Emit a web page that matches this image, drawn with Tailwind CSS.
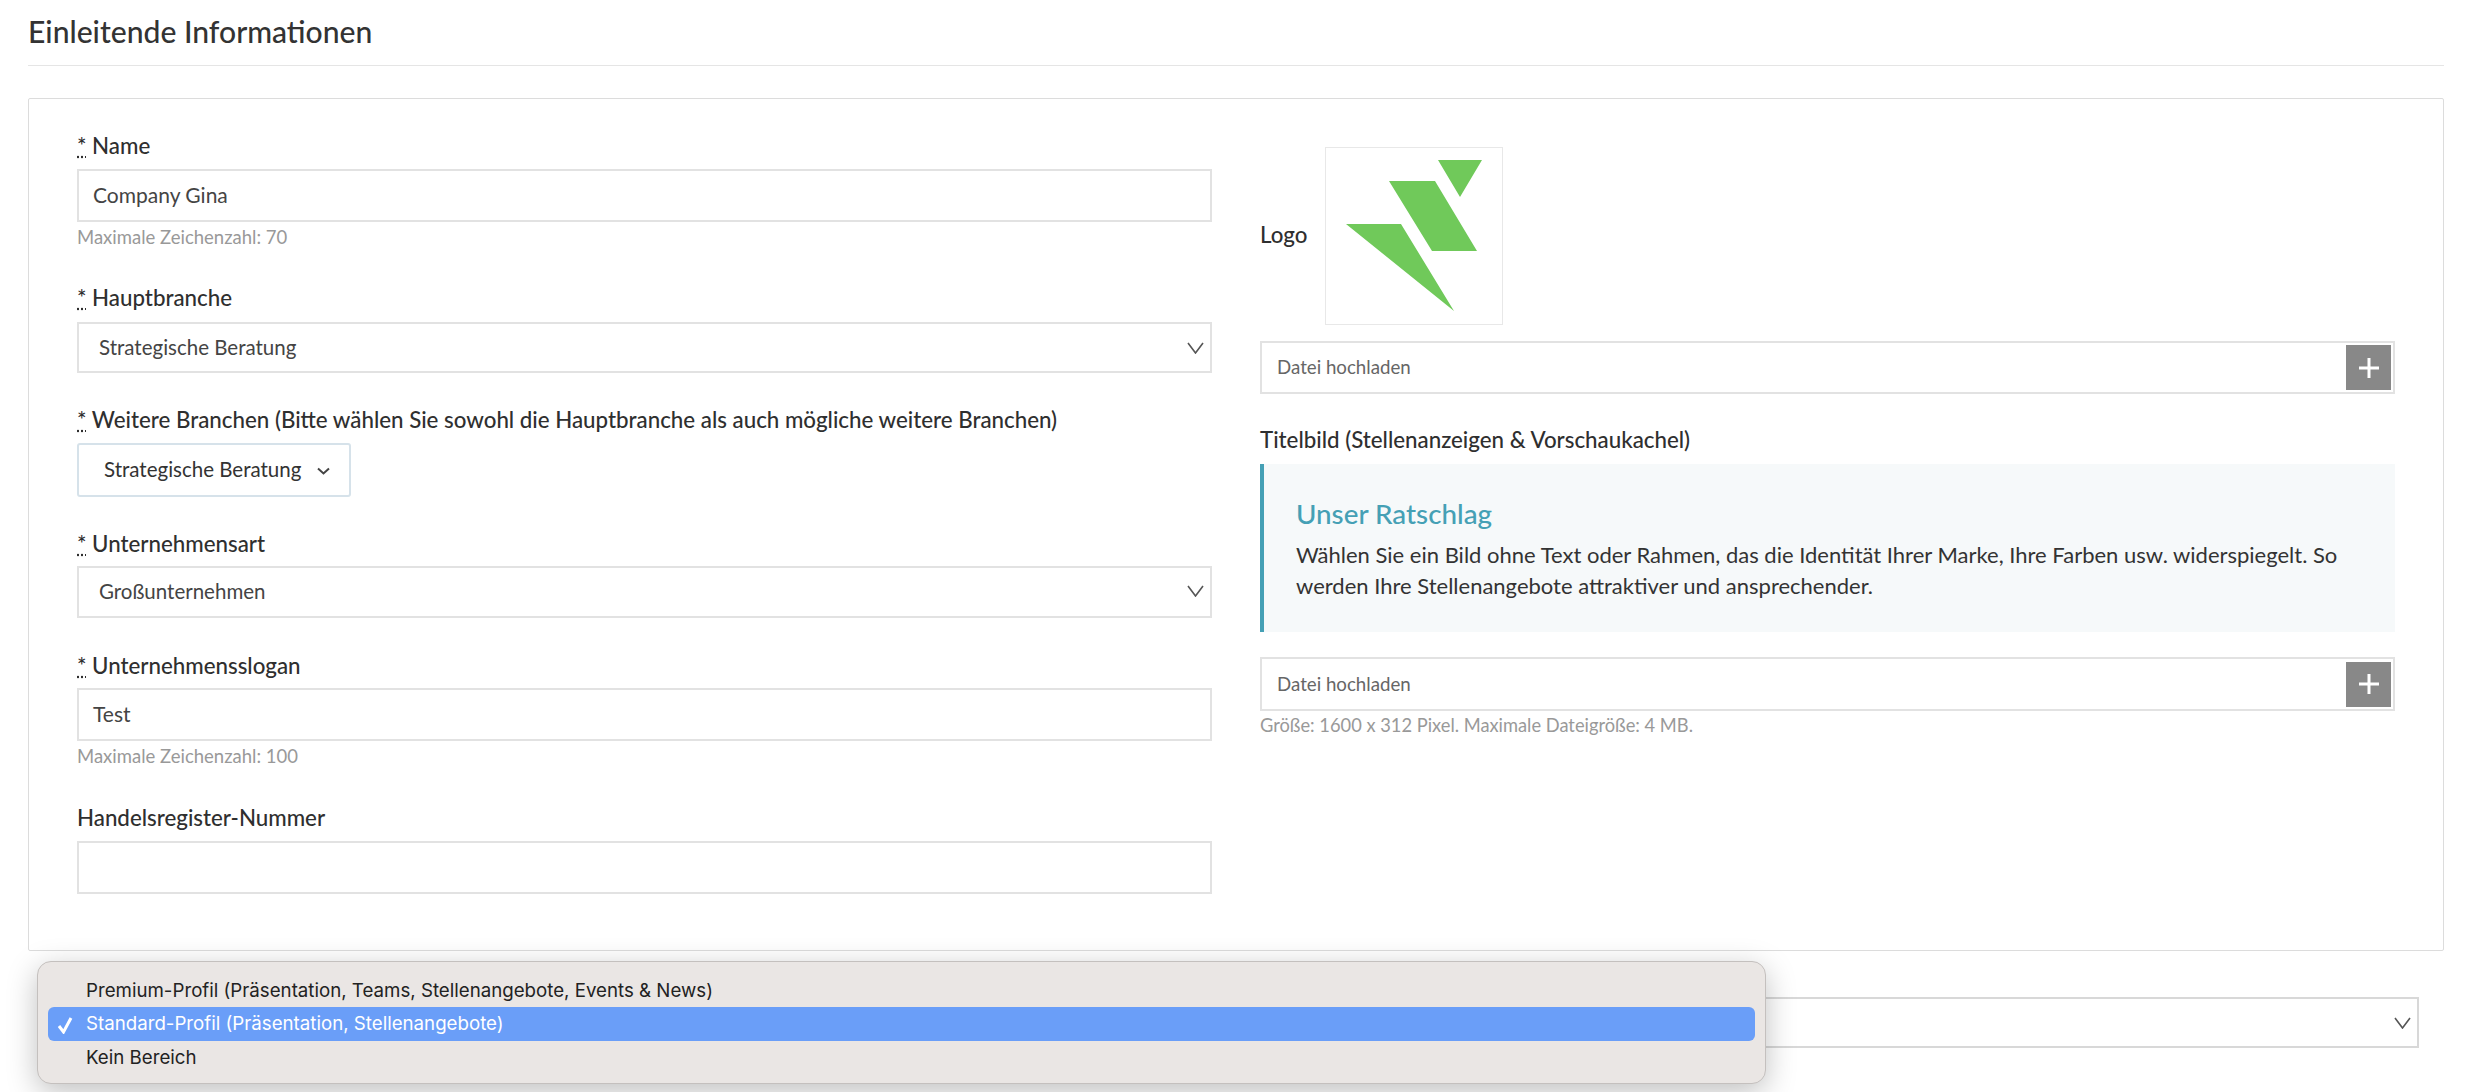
<!DOCTYPE html>
<html lang="de">
<head>
    <meta charset="UTF-8" />
    <title>Einleitende Informationen</title>
    <script src="https://cdn.jsdelivr.net/npm/@tailwindcss/browser@4"></script>
</head>
<body class="bg-white overflow-hidden font-['Lato',sans-serif] text-[#2f2f2f]">
<div class="relative h-[1092px] w-[2472px] overflow-hidden">
    <div class="px-[28px]">
        <h2 class="h-[66px] border-b border-[#e5e5e5] pt-[13px] text-[30.1px] leading-[36px] font-medium text-[#333]">Einleitende Informationen</h2>

        <div class="mt-[32px] h-[853px] rounded-[2px] border border-[#dcdcdc] flex">
            <!-- linke Spalte -->
            <div class="ml-[48px] w-[1135px] pt-[33px]">
                <label class="block h-[37px] text-[22.3px] leading-[28px] font-medium"><span class="underline decoration-dotted">*</span> Name</label>
                <div class="h-[53px] border-2 border-[#e2e2e2] px-[14px] text-[21px] leading-[47px] text-[#444]">Company Gina</div>
                <p class="mt-[5px] h-[20px] text-[18.5px] leading-[20px] text-[#999]">Maximale Zeichenzahl: 70</p>

                <label class="mt-[37px] block h-[38px] text-[22.3px] leading-[28px] font-medium"><span class="underline decoration-dotted">*</span> Hauptbranche</label>
                <div class="flex h-[51px] items-center justify-between border-2 border-[#e2e2e2] pl-[20px] pr-[5px] text-[20.5px] text-[#444]">
                    <span>Strategische Beratung</span>
                    <svg width="19" height="12" viewBox="0 0 19 12" fill="none" stroke="#555" stroke-width="1.6"><path d="M2 1l7.5 10L17 1"/></svg>
                </div>

                <label class="mt-[33px] block h-[37px] text-[22.3px] leading-[28px] font-medium"><span class="underline decoration-dotted">*</span> Weitere Branchen (Bitte wählen Sie sowohl die Hauptbranche als auch mögliche weitere Branchen)</label>
                <div class="flex h-[54px] w-[274px] items-center gap-[16px] rounded-[3px] border-2 border-[#d6e2ea] pl-[25px] pb-[2px] text-[20.5px] text-[#333]">
                    <span>Strategische Beratung</span>
                    <svg class="mt-[4px]" width="13" height="8" viewBox="0 0 13 8" fill="none" stroke="#444" stroke-width="2"><path d="M1 1.5l5.5 5 5.5-5"/></svg>
                </div>

                <label class="mt-[33px] block h-[36px] text-[22.3px] leading-[28px] font-medium"><span class="underline decoration-dotted">*</span> Unternehmensart</label>
                <div class="flex h-[52px] items-center justify-between border-2 border-[#e2e2e2] pl-[20px] pr-[5px] pb-[2px] text-[20.5px] text-[#444]">
                    <span>Großunternehmen</span>
                    <svg width="19" height="12" viewBox="0 0 19 12" fill="none" stroke="#555" stroke-width="1.6"><path d="M2 1l7.5 10L17 1"/></svg>
                </div>

                <label class="mt-[34px] block h-[36px] text-[22.3px] leading-[28px] font-medium"><span class="underline decoration-dotted">*</span> Unternehmensslogan</label>
                <div class="h-[53px] border-2 border-[#e2e2e2] px-[14px] text-[21px] leading-[47px] text-[#444]">Test</div>
                <p class="mt-[5px] h-[20px] text-[18.5px] leading-[20px] text-[#999]">Maximale Zeichenzahl: 100</p>

                <label class="mt-[38px] block h-[37px] text-[22.3px] leading-[28px] font-medium">Handelsregister-Nummer</label>
                <div class="h-[53px] border-2 border-[#e2e2e2]"></div>
            </div>

            <!-- rechte Spalte -->
            <div class="ml-[48px] w-[1135px] pt-[48px]">
                <div class="flex items-center gap-[17px]">
                    <span class="mb-[3px] text-[22.3px] font-medium">Logo</span>
                    <div class="h-[178px] w-[178px] border border-[#e8e8e8]">
                        <svg width="176" height="176" viewBox="0 0 176 176">
                            <path fill="#70c95a" d="M20 76H75L128 163zM63 33H109L151 103H106zM112 12H156L134 49z"/>
                        </svg>
                    </div>
                </div>
                <div class="mt-[16px] flex h-[53px] items-center justify-between border-2 border-[#e2e2e2] pl-[15px] pr-[2px] text-[18.7px] text-[#666]">
                    <span>Datei hochladen</span>
                    <span class="flex h-[45px] w-[45px] items-center justify-center bg-[#888]">
                        <svg width="20" height="20" viewBox="0 0 20 20" fill="none" stroke="#fff" stroke-width="3"><path d="M10 0v20M0 10h20"/></svg>
                    </span>
                </div>

                <p class="mt-[32px] h-[28px] text-[22.3px] leading-[28px] font-medium">Titelbild (Stellenanzeigen &amp; Vorschaukachel)</p>
                <div class="mt-[10px] h-[168px] border-l-4 border-[#45a0b5] bg-[#f6f9fa] pl-[32px] pt-[33px]">
                    <h3 class="text-[27.8px] leading-[34px] font-medium text-[#45a0b5]">Unser Ratschlag</h3>
                    <p class="mt-[8px] text-[22px] leading-[31px] text-[#333]">Wählen Sie ein Bild ohne Text oder Rahmen, das die Identität Ihrer Marke, Ihre Farben usw. widerspiegelt. So<br>werden Ihre Stellenangebote attraktiver und ansprechender.</p>
                </div>
                <div class="mt-[25px] flex h-[54px] items-center justify-between border-2 border-[#e2e2e2] pl-[15px] pr-[2px] text-[18.7px] text-[#666]">
                    <span>Datei hochladen</span>
                    <span class="flex h-[45px] w-[45px] items-center justify-center bg-[#888]">
                        <svg width="20" height="20" viewBox="0 0 20 20" fill="none" stroke="#fff" stroke-width="3"><path d="M10 0v20M0 10h20"/></svg>
                    </span>
                </div>
                <p class="mt-[4px] text-[18.3px] leading-[20px] text-[#999]">Größe: 1600 x 312 Pixel. Maximale Dateigröße: 4 MB.</p>
            </div>
        </div>

        <!-- Bereich-Auswahl unter der Karte -->
        <div class="ml-[25px] mr-[25px] mt-[46px] flex h-[51px] items-center justify-end border-2 border-[#d8d8d8] pr-[5px]">
            <svg width="19" height="12" viewBox="0 0 19 12" fill="none" stroke="#555" stroke-width="1.6"><path d="M2 1l7.5 10L17 1"/></svg>
        </div>
    </div>

    <!-- geöffnetes natives Auswahlmenü -->
    <div class="absolute left-[37px] top-[961px] h-[123px] w-[1729px] rounded-[14px] border border-[#c4c0be] bg-[#eae6e4] px-[10px] pt-[12px] text-[18.7px] text-[#222] shadow-[0_8px_30px_rgba(0,0,0,0.25)] font-['Inter',sans-serif]">
        <div class="h-[33px] pl-[38px] leading-[33px]">Premium-Profil (Präsentation, Teams, Stellenangebote, Events &amp; News)</div>
        <div class="relative h-[34px] rounded-[6px] bg-[#6a9ef8] pl-[38px] leading-[34px] text-white">
            <svg class="absolute left-[9px] top-[10px]" width="18" height="17" viewBox="0 0 18 17" fill="none" stroke="#fff" stroke-width="3"><path d="M2 9l4.5 6L14 1"/></svg>
            Standard-Profil (Präsentation, Stellenangebote)
        </div>
        <div class="h-[34px] pl-[38px] leading-[34px]">Kein Bereich</div>
    </div>
</div>
</body>
</html>
